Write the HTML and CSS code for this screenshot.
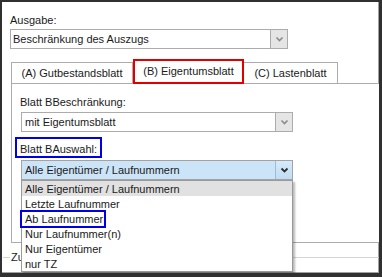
FILE: index.html
```html
<!DOCTYPE html>
<html lang="de">
<head>
<meta charset="utf-8">
<title>Ausgabe</title>
<link rel="stylesheet" href="styles.css">
</head>
<body>
<div class="frame">
  <div class="field-label">Ausgabe:</div>
  <div class="select sel-main">
    <span class="sel-text">Beschränkung des Auszugs</span>
    <span class="sel-btn"><svg width="9" height="6" viewBox="0 0 9 6"><path d="M1.5 1.5 L4.5 4.5 L7.5 1.5" fill="none" stroke="#8a8a8a" stroke-width="1.6"/></svg></span>
  </div>
  <div class="tabs">
    <div class="tab tab-a">(A) Gutbestandsblatt</div>
    <div class="tab tab-b">(B) Eigentumsblatt</div>
    <div class="tab tab-c">(C) Lastenblatt</div>
  </div>
  <div class="panel">
    <div class="label">Blatt BBeschränkung:</div>
    <div class="select sel-wide">
      <span class="sel-text">mit Eigentumsblatt</span>
      <span class="sel-btn"><svg width="9" height="6" viewBox="0 0 9 6"><path d="M1.5 1.5 L4.5 4.5 L7.5 1.5" fill="none" stroke="#8a8a8a" stroke-width="1.6"/></svg></span>
    </div>
    <div class="label label-marked">Blatt BAuswahl:</div>
    <div class="combo">
      <div class="select sel-wide sel-focus">
        <span class="sel-text">Alle Eigentümer / Laufnummern</span>
        <span class="sel-btn"><svg width="9" height="6" viewBox="0 0 9 6"><path d="M1.5 1.5 L4.5 4.5 L7.5 1.5" fill="none" stroke="#2e2e2e" stroke-width="1.8"/></svg></span>
      </div>
      <ul class="dropdown">
        <li class="item item-hover">Alle Eigentümer / Laufnummern</li>
        <li class="item">Letzte Laufnummer</li>
        <li class="item item-marked">Ab Laufnummer<span class="mark-box"></span></li>
        <li class="item">Nur Laufnummer(n)</li>
        <li class="item">Nur Eigentümer</li>
        <li class="item">nur TZ</li>
      </ul>
    </div>
  </div>
  <div class="group">
    <span class="group-line group-line-short"></span>
    <span class="group-title">Zu</span>
    <span class="group-line group-line-long"></span>
  </div>
</div>
</body>
</html>
```

FILE: styles.css
```css
* {
  box-sizing: border-box;
}

html, body {
  margin: 0;
  padding: 0;
  background: #ffffff;
}

body {
  font-family: "Liberation Sans", Arial, sans-serif;
  font-size: 11px;
  color: #1a1a1a;
}

.frame {
  width: 382px;
  height: 277px;
  border-style: solid;
  border-color: #303030;
  border-width: 2px 3px 4px 2px;
  box-shadow: inset -1px -1px 0 #a0a0a0;
  background: #ffffff;
  padding: 11px 0 0 8px;
  overflow: hidden;
}

.field-label {
  line-height: 14px;
  height: 14px;
}

.select {
  display: flex;
  align-items: stretch;
  height: 20px;
  border: 1px solid #acacac;
  background: #ffffff;
}

.sel-main {
  margin-top: 2px;
  width: 278px;
}

.sel-text {
  flex: 1;
  padding-left: 2px;
  line-height: 18px;
  white-space: nowrap;
  overflow: hidden;
}

.sel-btn {
  width: 17px;
  border-left: 1px solid #acacac;
  background: #e5e5e5;
  display: flex;
  align-items: center;
  justify-content: center;
}

.tabs {
  display: flex;
  align-items: flex-end;
  margin-top: 10px;
  margin-left: 1px;
  height: 24px;
}

.tab {
  height: 21px;
  line-height: 20px;
  text-align: center;
  white-space: nowrap;
  border: 1px solid #acacac;
  border-bottom: none;
  background: #ffffff;
}

.tab-a {
  width: 122px;
}

.tab-b {
  width: 111px;
  height: 25px;
  line-height: 21px;
  margin-bottom: -1px;
  border: 2px solid #e00000;
  position: relative;
  z-index: 1;
}

.tab-c {
  width: 94px;
  border-left: none;
}

.panel {
  margin-left: 1px;
  width: 400px;
  height: 160px;
  border: 1px solid #acacac;
  padding: 11px 0 0 8px;
  background: #ffffff;
}

.label {
  line-height: 14px;
  height: 14px;
}

.sel-wide {
  margin-top: 3px;
  margin-left: 1px;
  width: 272px;
}

.sel-wide .sel-text {
  padding-left: 3px;
}

.label-marked {
  display: block;
  width: fit-content;
  height: 21px;
  margin-top: 5px;
  margin-left: -5px;
  padding: 4px 3px 0 3px;
  line-height: 13px;
  border: 2px solid #0000e6;
}

.combo {
  position: relative;
  margin-top: 2px;
}

.combo .sel-wide {
  margin-top: 0;
}

.sel-focus {
  background: #cce4f7;
  border-color: #a3a3a3;
}

.sel-focus .sel-btn {
  background: linear-gradient(#d6eafb, #c0dcf5);
  border-left-color: #9fbbd6;
}

.dropdown {
  position: absolute;
  left: 1px;
  top: 20px;
  width: 272px;
  height: 92px;
  margin: 0;
  padding: 0;
  list-style: none;
  background: #ffffff;
  border: 1px solid #9a9a9a;
  box-shadow: 2px 2px 2px rgba(0, 0, 0, 0.28);
  z-index: 5;
}

.item {
  height: 15px;
  line-height: 16px;
  padding-left: 3px;
  white-space: nowrap;
}

.item-hover {
  background: #e1e1e1;
}

.item-marked {
  position: relative;
}

.mark-box {
  position: absolute;
  left: -2px;
  top: -1px;
  width: 86px;
  height: 18px;
  border: 2px solid #0000e6;
}

.group {
  display: flex;
  align-items: center;
  margin-top: 7px;
  margin-left: -7px;
  height: 14px;
}

.group-line {
  height: 1px;
  background: #d5d5d5;
}

.group-line-short {
  width: 7px;
}

.group-title {
  padding: 0 2px 0 1px;
  line-height: 14px;
}

.group-line-long {
  flex: 1;
}
```
